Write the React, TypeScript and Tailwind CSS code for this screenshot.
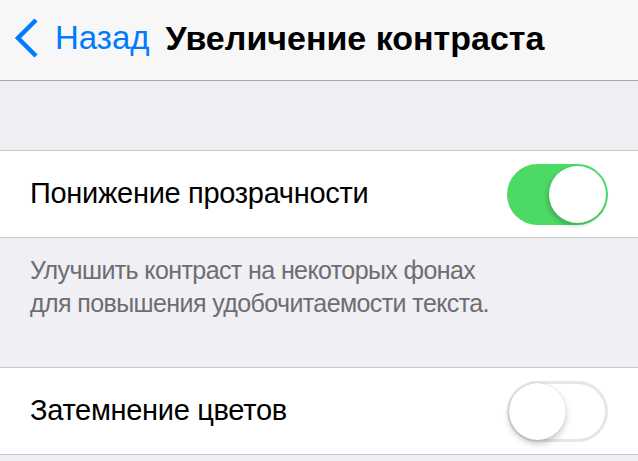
import React from "react";

function Toggle({ on }: { on: boolean }) {
  return (
    <div
      className={
        "relative h-[61px] w-[101px] rounded-full box-border " +
        (on ? "bg-[#4cd964]" : "bg-white border-[3px] border-[#e5e5ea]")
      }
    >
      <div
        className={
          "absolute rounded-full bg-white h-[57px] w-[57px] " +
          (on
            ? "top-[2px] right-[2px] shadow-[-2px_3px_4px_rgba(0,0,0,0.18)]"
            : "top-[-1px] left-[-1px] shadow-[0_4px_6px_rgba(0,0,0,0.2),0_0_1px_rgba(0,0,0,0.25)]")
        }
      />
    </div>
  );
}

export default function App() {
  return (
    <div
      className="w-[638px] h-[461px] overflow-hidden bg-[#efeff4]"
      style={{ fontFamily: '"Liberation Sans", Arial, sans-serif' }}
    >
      <div className="h-[81px] bg-[#f7f7f7] border-b border-[#a7a7aa] flex items-center">
        <svg width="26" height="40" viewBox="0 0 26 40" className="ml-[14px] mt-[-5px]">
          <path d="M22 2 L4 20 L22 38" fill="none" stroke="#007aff" strokeWidth="4.5" />
        </svg>
        <span className="ml-[15px] text-[33px] text-[#007aff] mt-[-4px]">Назад</span>
        <span className="ml-[16px] text-[34px] font-bold text-black mt-[-4px]">Увеличение контраста</span>
      </div>
      <div className="h-[69px]" />
      <div className="h-[88px] bg-white border-y border-[#c8c7cc] flex items-center justify-between pl-[30px] pr-[30px]">
        <span className="text-[29px] tracking-[-0.3px] text-black">Понижение прозрачности</span>
        <Toggle on={true} />
      </div>
      <div className="h-[129px] pl-[30px] pt-[16px] text-[25px] tracking-[-0.6px] leading-[33px] text-[#6d6d72]">
        Улучшить контраст на некоторых фонах
        <br />
        для повышения удобочитаемости текста.
      </div>
      <div className="h-[88px] bg-white border-y border-[#c8c7cc] flex items-center justify-between pl-[30px] pr-[30px]">
        <span className="text-[29px] tracking-[-0.3px] text-black">Затемнение цветов</span>
        <Toggle on={false} />
      </div>
    </div>
  );
}
